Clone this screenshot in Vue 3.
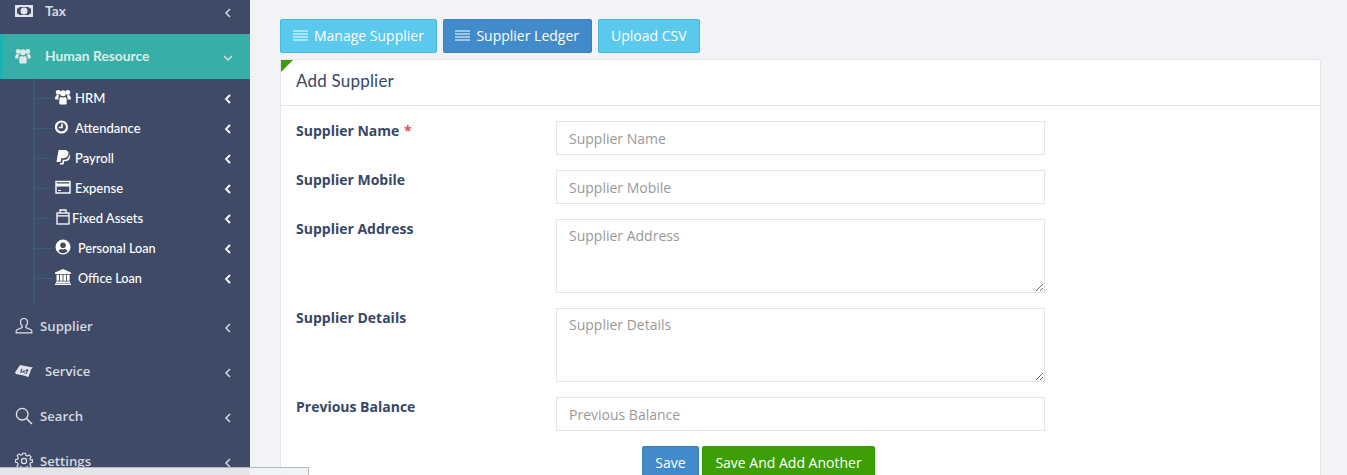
<script setup>
const subItems = [
  { label: 'HRM', icon: 'users', cls: 'gap-normal' },
  { label: 'Attendance', icon: 'clock', cls: 'gap-normal' },
  { label: 'Payroll', icon: 'paypal', cls: 'gap-normal' },
  { label: 'Expense', icon: 'card', cls: 'gap-normal' },
  { label: 'Fixed Assets', icon: 'bag', cls: 'gap-tight' },
  { label: 'Personal Loan', icon: 'user', cls: 'gap-wide' },
  { label: 'Office Loan', icon: 'bank', cls: 'gap-wide' },
];

const bottomItems = [
  { label: 'Supplier', icon: 'person', cls: '' },
  { label: 'Service', icon: 'service', cls: 'service' },
  { label: 'Search', icon: 'search', cls: '' },
  { label: 'Settings', icon: 'gear', cls: '' },
];

const fields = [
  { label: 'Supplier Name', required: true, rows: 0 },
  { label: 'Supplier Mobile', rows: 0 },
  { label: 'Supplier Address', rows: 3 },
  { label: 'Supplier Details', rows: 3 },
  { label: 'Previous Balance', rows: 0 },
];
</script>

<template>
  <div class="page">
    <aside class="sidebar">
      <a class="menu-row tax">
        <svg class="menu-icon" viewBox="0 0 18 14">
          <path fill="currentColor" fill-rule="evenodd" d="M0 1h18v12H0zM2 4.500v5a2.500 2.500 0 0 1 2.500 1.500h9A2.500 2.500 0 0 1 16 9.500v-5A2.500 2.500 0 0 1 13.500 3h-9A2.500 2.500 0 0 1 2 4.500zM9 3.500a3.500 3.500 0 1 1 0 7 3.500 3.500 0 0 1 0-7z" />
        </svg>
        <span class="menu-label alt">Tax</span>
        <svg class="chevron" viewBox="0 0 8 10"><path d="M6 1 2 5l4 4" /></svg>
      </a>

      <a class="menu-row active">
        <svg class="menu-icon" viewBox="0 0 16 16">
          <g fill="currentColor">
            <circle cx="3.200" cy="3.400" r="2.400" /><circle cx="12.800" cy="3.400" r="2.400" /><circle cx="8" cy="4.300" r="3" />
            <path d="M0 10.500c0-3 1-4.500 2.400-4.500l1.900.6c-.8 1.100-1 2.300-1 3.900H1c-.6 0-1-.2-1-.5zM16 10.500c0-3-1-4.500-2.400-4.500l-1.900.6c.8 1.100 1 2.300 1 3.900H15c.6 0 1-.2 1-.5zM4.300 11c0-1.700.7-3 1.900-3L8 8.700 9.800 8c1.200 0 1.900 1.300 1.900 3v3.300c0 .8-.5 1.200-1.400 1.200H5.700c-.9 0-1.400-.4-1.400-1.200z" />
          </g>
        </svg>
        <span class="menu-label alt">Human Resource</span>
        <svg class="chevron" viewBox="0 0 10 8"><path d="M1 2l4 4 4-4" /></svg>
      </a>

      <ul class="sub-menu">
        <li v-for="item in subItems" :key="item.label" class="sub-row" :class="item.cls">
          <svg class="sub-icon" viewBox="0 0 16 16">
            <g v-if="item.icon === 'users'" fill="currentColor">
              <circle cx="3.200" cy="3.400" r="2.400" /><circle cx="12.800" cy="3.400" r="2.400" /><circle cx="8" cy="4.300" r="3" />
              <path d="M0 10.500c0-3 1-4.500 2.400-4.500l1.900.6c-.8 1.100-1 2.300-1 3.900H1c-.6 0-1-.2-1-.5zM16 10.500c0-3-1-4.500-2.400-4.500l-1.900.6c.8 1.100 1 2.300 1 3.900H15c.6 0 1-.2 1-.5zM4.300 11c0-1.700.7-3 1.900-3L8 8.700 9.800 8c1.200 0 1.900 1.300 1.900 3v3.300c0 .8-.5 1.200-1.400 1.200H5.700c-.9 0-1.400-.4-1.400-1.200z" />
            </g>
            <g v-else-if="item.icon === 'clock'" fill="none" stroke="currentColor">
              <circle cx="6.500" cy="8" r="5.500" stroke-width="2.200" />
              <path d="M7 4.500v4H3.800" stroke-width="1.600" />
            </g>
            <g v-else-if="item.icon === 'paypal'" fill="currentColor">
              <path d="M3.500 1h5.500c3.500 0 5 1.700 4.400 4.300C12.800 8 10.800 9.200 8 9.200H6.300L5.500 13H1.500z" />
              <path d="M14.200 5.500c.9 1 1 2.300.6 3.500-.6 2.200-2.300 3.300-4.700 3.300H9.200l-.7 3.200H4.800l.3-1.500h2l.7-3.200h1.500c2.800 0 4.700-1.500 4.900-5.800z" />
            </g>
            <g v-else-if="item.icon === 'card'" fill="none" stroke="currentColor">
              <rect x="1" y="2.500" width="14" height="11.500" stroke-width="1.400" />
              <path d="M1 6h14" stroke-width="3" />
              <path d="M3 11.500h3" stroke-width="1" />
            </g>
            <g v-else-if="item.icon === 'bag'" fill="none" stroke="currentColor" stroke-width="1.300">
              <rect x="2" y="4" width="12" height="11" />
              <path d="M2 6.800h12M5 4V1h6v3" />
            </g>
            <path v-else-if="item.icon === 'user'" fill="currentColor" fill-rule="evenodd" d="M8 .5a7.500 7.500 0 1 1 0 15 7.500 7.500 0 0 1 0-15zM8 3.500a2.800 2.800 0 1 0 0 5.600 2.800 2.800 0 0 0 0-5.600zM3.500 12.200a6 6 0 0 0 9 0C12 10.800 10.800 10 9.600 10L8 10.500 6.400 10C5.200 10 4 10.800 3.500 12.200z" />
            <path v-else fill="currentColor" d="M8 0l8 3.500V5H0V3.500zM1.500 5.800h2.600v6H1.500zM5 5.800h2.600v6H5zM8.500 5.800h2.600v6H8.500zM12 5.800h2.600v6H12zM1 12.500h14V14H1zM0 14.500h16V16H0z" />
          </svg>
          <span class="sub-label">{{ item.label }}</span>
          <svg class="chevron bright" viewBox="0 0 8 10"><path d="M6 1 2 5l4 4" /></svg>
        </li>
      </ul>

      <a v-for="item in bottomItems" :key="item.label" class="menu-row" :class="item.cls">
        <svg class="menu-icon" viewBox="0 0 18 18">
          <g v-if="item.icon === 'person'" fill="none" stroke="currentColor" stroke-width="1.200">
            <path d="M9 1.500c-2.300 0-3.500 1.700-3.500 3.700 0 1.800.8 3 1.600 3.800v1.500L2 12.800c-.6.300-.8.800-.8 1.400v1.600h15.600v-1.600c0-.6-.2-1.100-.8-1.400l-5.100-2.300V9c.8-.8 1.600-2 1.600-3.800 0-2-1.200-3.700-3.500-3.700z" />
          </g>
          <path v-else-if="item.icon === 'service'" fill="currentColor" fill-rule="evenodd" d="M5 3l13 2.500-2 2-2.500 7.500-5-1.500L1 12 0 10.500zM6.500 6.500L5 10.500h4.500l1-1.800H8l-.3 1H6.700l.8-2.700zM11 7.500l-.7 1.400h1.500l-.9 2H9.800l-.3.800h2.200l1.800-4.200z" />
          <g v-else-if="item.icon === 'search'" fill="none" stroke="currentColor" stroke-width="1.300">
            <circle cx="7.200" cy="7.200" r="5.800" />
            <path d="M11.500 11.500 17 17" stroke-width="1.500" />
          </g>
          <g v-else fill="none" stroke="currentColor" stroke-width="1.200">
            <circle cx="9" cy="9" r="2.600" />
            <path d="M7.500 1h3l.4 2.300 1.500.7 2-1.300 2 2-1.300 2 .7 1.500L18 7.700v2.800l-2.200.5-.7 1.500 1.300 2-2 2-2-1.300-1.500.7-.4 2.100h-3l-.4-2.100-1.500-.7-2 1.300-2-2 1.300-2-.7-1.500L0 10.500V7.700l2.300-.5L3 5.700l-1.300-2 2-2 2 1.300 1.500-.7z" transform="translate(.5 .3) scale(.95)" />
          </g>
        </svg>
        <span class="menu-label">{{ item.label }}</span>
        <svg class="chevron" viewBox="0 0 8 10"><path d="M6 1 2 5l4 4" /></svg>
      </a>
    </aside>

    <main class="content">
      <div class="top-buttons">
        <button class="btn btn-info btn-manage">
          <svg class="lines" viewBox="0 0 15 12"><path d="M0 1h15M0 4h15M0 7h15M0 10h15" /></svg>
          Manage Supplier
        </button>
        <button class="btn btn-primary">
          <svg class="lines" viewBox="0 0 15 12"><path d="M0 1h15M0 4h15M0 7h15M0 10h15" /></svg>
          Supplier Ledger
        </button>
        <button class="btn btn-info btn-upload">Upload CSV</button>
      </div>

      <section class="card">
        <span class="corner"></span>
        <header class="card-head">Add Supplier</header>
        <form class="card-body" @submit.prevent>
          <div v-for="field in fields" :key="field.label" class="form-row">
            <label class="form-label">
              {{ field.label }}
              <span v-if="field.required" class="req">*</span>
            </label>
            <textarea v-if="field.rows" class="control area" :placeholder="field.label"></textarea>
            <input v-else class="control" type="text" :placeholder="field.label" />
          </div>
          <div class="actions">
            <button class="btn btn-save">Save</button>
            <button class="btn btn-add">Save And Add Another</button>
          </div>
        </form>
      </section>
    </main>

    <div class="status-bar"></div>
  </div>
</template>

<style>
html,
body {
  margin: 0;
  height: 100%;
  overflow: hidden;
  background: #f1f3f6;
}
</style>

<style scoped>
.page {
  position: relative;
  display: flex;
  height: 475px;
  overflow: hidden;
  background: #f1f3f6;
  font-family: "Open Sans", sans-serif;
}

.sidebar {
  flex: 0 0 250px;
  height: 486px;
  margin-top: -11px;
  background: #3f4b66;
  color: #dfe3ea;
}

.menu-row {
  display: flex;
  align-items: center;
  height: 45px;
  padding: 0 18px 0 15px;
}

.menu-icon {
  flex: none;
  width: 18px;
  height: 18px;
  margin-bottom: 2px;
}

.menu-label {
  flex: 1;
  margin-bottom: 2px;
  margin-left: 7px;
  font-size: 13.200px;
  font-weight: 600;
  color: #d5dae3;
}

.menu-label.alt {
  margin-left: 12px;
  font-family: Lato, sans-serif;
  font-size: 13.800px;
  font-weight: 700;
}

.menu-row > .chevron {
  margin-top: 2px;
}

.menu-row.tax {
  align-items: flex-start;
  padding-top: 13px;
  height: 32px;
  padding-bottom: 0;
}

.menu-row.tax .chevron {
  margin-top: 6px;
}

.menu-row.active {
  padding-left: 12px;
  border-left: 3px solid #19b3b3;
  background: #37afa6;
  color: #dfe8e6;
}

.menu-row.active .menu-label {
  color: #dbeeea;
}

.menu-row.active .menu-icon {
  width: 16px;
  height: 16px;
  margin-right: 2px;
}

.menu-row.service .menu-label {
  margin-left: 12px;
}

.chevron {
  flex: none;
  width: 8px;
  height: 10px;
  fill: none;
  stroke: #d5dae3;
  stroke-width: 1.500;
}

.menu-row.active .chevron {
  width: 10px;
  height: 8px;
  margin-right: -1px;
}

.chevron.bright {
  margin-top: 4px;
  stroke: #ffffff;
  stroke-width: 1.800;
}

.sub-menu {
  height: 225px;
  margin: 0 0 0 33px;
  padding: 3px 0 0;
  box-sizing: border-box;
  border-left: 2px solid #3a5a76;
  list-style: none;
}

.sub-row {
  position: relative;
  display: flex;
  align-items: center;
  height: 30px;
  padding: 0 18px 0 20px;
  color: #ffffff;
}

.sub-row::before {
  content: "";
  position: absolute;
  left: 0;
  top: 16px;
  width: 18px;
  height: 1px;
  background: #3a5a76;
}

.sub-icon {
  flex: none;
  width: 16px;
  height: 16px;
}

.sub-label {
  flex: 1;
  margin-top: 2px;
  font-family: Lato, sans-serif;
  font-size: 13px;
  font-weight: 500;
}

.gap-normal .sub-label {
  margin-left: 4px;
}

.gap-tight .sub-label {
  margin-left: 1px;
}

.gap-wide .sub-label {
  margin-left: 7px;
  font-size: 12.650px;
}

.content {
  flex: 1;
  padding: 19px 26px 0 30px;
}

.top-buttons {
  display: flex;
  gap: 6px;
  margin-bottom: 6px;
}

.btn {
  display: inline-flex;
  align-items: center;
  justify-content: center;
  height: 34px;
  padding-bottom: 2px;
  box-sizing: border-box;
  border: 1px solid transparent;
  border-radius: 2px;
  font-family: "Open Sans", sans-serif;
  font-size: 14px;
  color: #ffffff;
  white-space: nowrap;
}

.btn-info {
  padding-left: 12px;
  padding-right: 12px;
  border-color: #46b8da;
  background: #5bc9ee;
}

.btn-upload {
  padding-left: 12.500px;
  padding-right: 12.500px;
}

.btn-primary {
  padding-left: 11.500px;
  padding-right: 11.500px;
  border-color: #3a7fb8;
  background: #428bca;
}

.lines {
  width: 15px;
  height: 12px;
  margin-right: 6px;
  fill: none;
  stroke: #ffffff;
  stroke-width: 1;
}

.card {
  position: relative;
  box-sizing: border-box;
  height: 440px;
  border: 1px solid #e4e5e7;
  border-radius: 3px;
  background: #ffffff;
}

.corner {
  position: absolute;
  left: 0;
  top: 0;
  width: 0;
  height: 0;
  border-top: 12px solid #3c9d0c;
  border-right: 12px solid transparent;
}

.card-head {
  height: 46px;
  box-sizing: border-box;
  padding: 0 15px;
  border-bottom: 1px solid #e4e5e7;
  font-family: Lato, sans-serif;
  font-size: 17px;
  letter-spacing: 0.2px;
  line-height: 42px;
  color: #374767;
}

.card-body {
  padding: 15px 15px 0;
}

.form-row {
  display: flex;
  margin-bottom: 15px;
}

.form-label {
  flex: 0 0 260px;
  font-size: 14px;
  font-weight: 700;
  line-height: 20px;
  color: #374767;
}

.req {
  margin-left: 1px;
  color: #d9534f;
}

.control {
  flex: none;
  display: block;
  width: 489px;
  height: 34px;
  margin: 0;
  padding: 6px 12px;
  box-sizing: border-box;
  border: 1px solid #e4e5e7;
  border-radius: 0;
  outline: none;
  background: #ffffff;
  font-family: "Open Sans", sans-serif;
  font-size: 14px;
  color: #555555;
}

.control::placeholder {
  color: #999999;
  opacity: 1;
}

.area {
  height: 74px;
  resize: vertical;
}

.actions {
  display: flex;
  gap: 3px;
  padding-left: 346px;
}

.btn-save {
  width: 57px;
  border-color: #3a7fb8;
  background: #428bca;
}

.btn-add {
  width: 173px;
  border-color: #379a08;
  background: #3c9f06;
}

.status-bar {
  position: absolute;
  left: 0;
  bottom: 0;
  width: 308px;
  height: 7px;
  border: 1px solid #b5b7bb;
  border-bottom: 0;
  border-left: 0;
  background: rgba(240, 243, 246, 0.92);
}
</style>
